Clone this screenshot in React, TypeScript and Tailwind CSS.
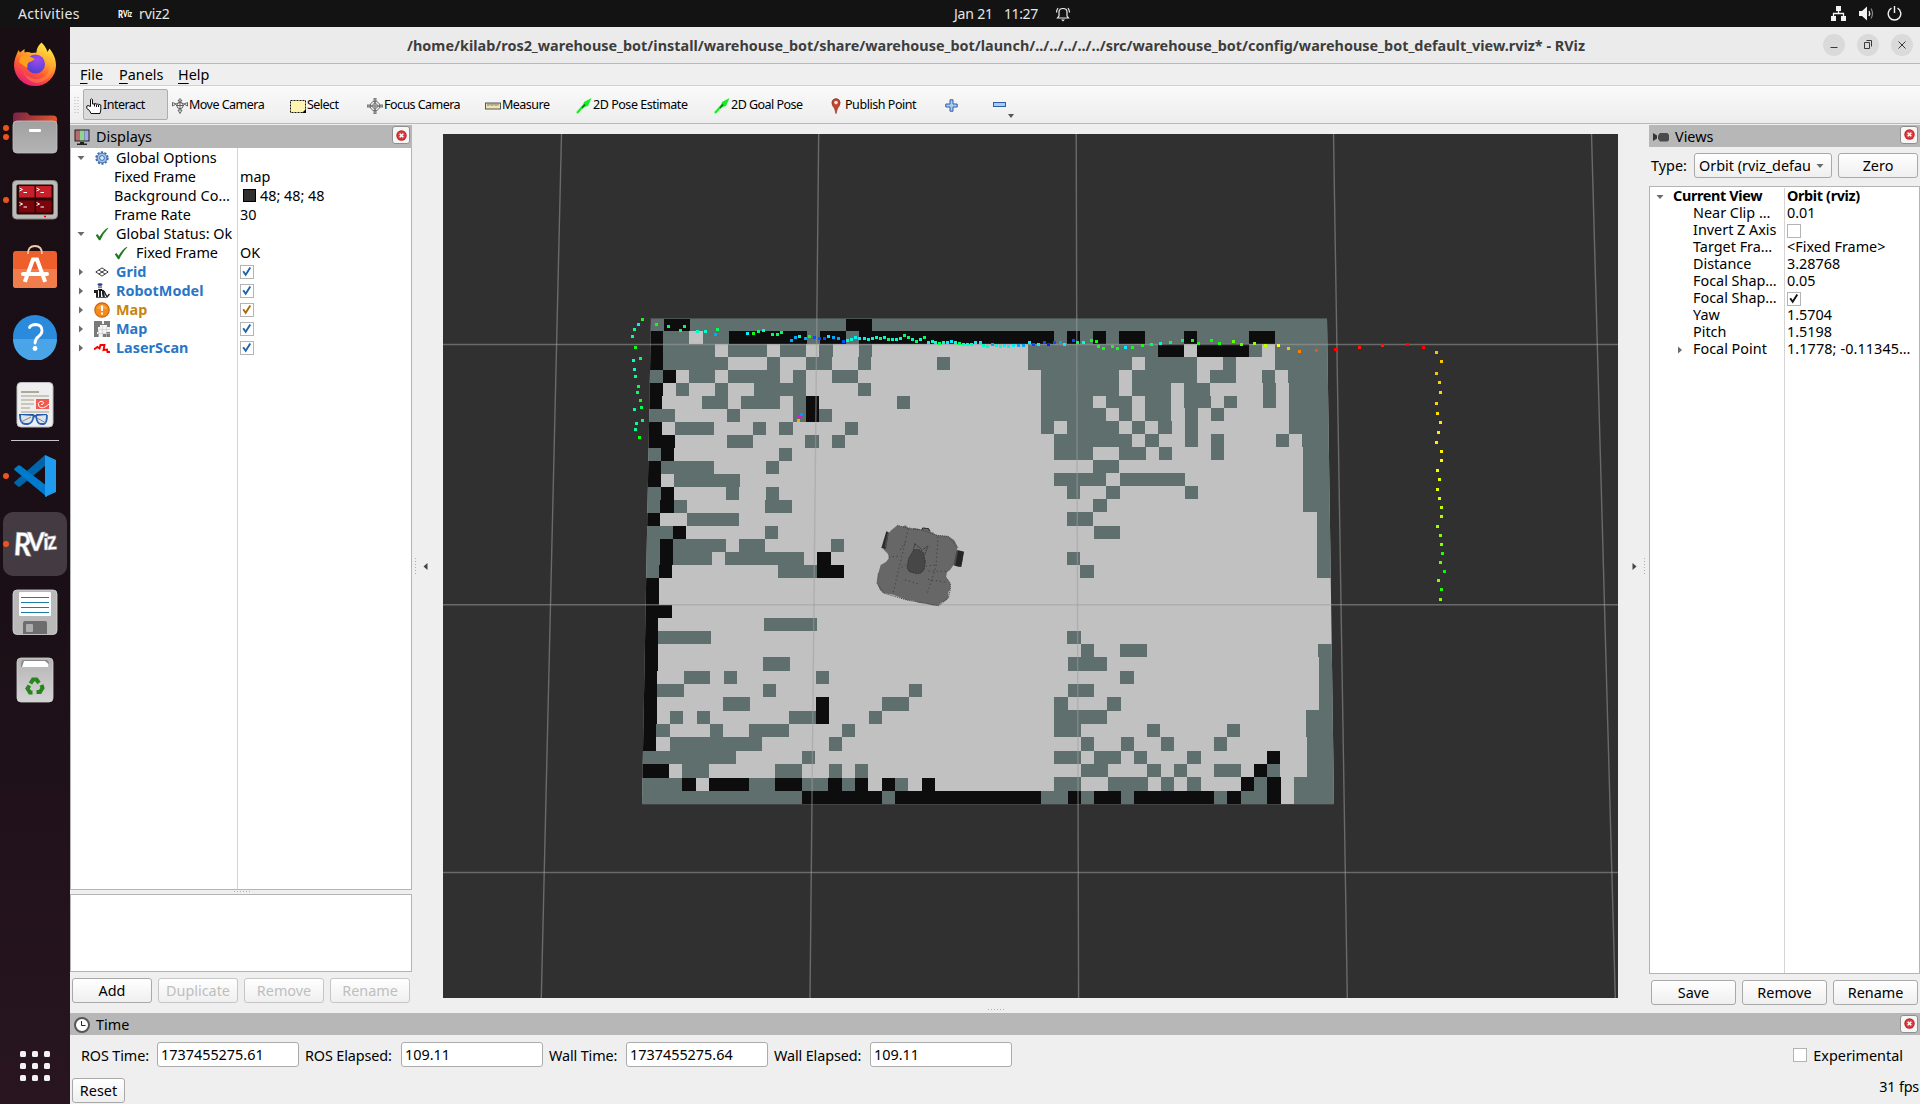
import React from "react";

type Span = [number, number];
type Row = { y: Span; t?: Span[]; b?: Span[]; l?: Span[] };

/* Occupancy map, west half: t = unknown, b = occupied, l = free. */
const WEST: Row[] = [
  { y: [318, 331], t: [[640, 975]], b: [[664, 690], [846, 872]] },
  { y: [331, 344], t: [[663, 729], [807, 820], [846, 859]], b: [[640, 663], [729, 807], [820, 846], [859, 975]], l: [[689, 703]] },
  { y: [344, 357], t: [[663, 715], [728, 767], [780, 806], [819, 833], [859, 872]], b: [[640, 663]] },
  { y: [357, 370], t: [[663, 728], [767, 780], [806, 832], [858, 871], [937, 950]], b: [[640, 663]] },
  { y: [370, 383], t: [[640, 663], [689, 715], [728, 780], [793, 806], [832, 858]], b: [[663, 676]] },
  { y: [383, 396], t: [[676, 689], [715, 728], [754, 806], [858, 871]], b: [[640, 663]] },
  { y: [396, 409], t: [[702, 728], [741, 780], [793, 806], [897, 910]], b: [[640, 662], [806, 819]] },
  { y: [409, 422], t: [[640, 675], [727, 740], [793, 806], [819, 832]], b: [[806, 819]] },
  { y: [422, 435], t: [[675, 714], [753, 766], [779, 793], [845, 858]], b: [[640, 662]] },
  { y: [435, 448], t: [[727, 753], [805, 819], [832, 845]], b: [[640, 675]] },
  { y: [448, 461], t: [[640, 661], [779, 792]], b: [[661, 674]] },
  { y: [461, 474], t: [[661, 714], [766, 779]], b: [[640, 661]] },
  { y: [474, 487], t: [[674, 740]], b: [[640, 661]] },
  { y: [487, 500], t: [[640, 661], [726, 739], [766, 779]], b: [[661, 674]] },
  { y: [500, 513], t: [[640, 660], [674, 687], [765, 792]], b: [[660, 674]] },
  { y: [513, 526], t: [[687, 739]], b: [[640, 660]] },
  { y: [526, 539], t: [[640, 673], [765, 778]], b: [[673, 686]] },
  { y: [539, 552], t: [[640, 660], [673, 726], [739, 765], [831, 844]], b: [[660, 673]] },
  { y: [552, 565], t: [[640, 660], [673, 712], [725, 804]], b: [[660, 673], [817, 831]] },
  { y: [565, 578], t: [[640, 659], [778, 817]], b: [[659, 672], [817, 844]] },
  { y: [578, 605], b: [[640, 659]] },
  { y: [605, 618], b: [[640, 672]] },
  { y: [618, 631], t: [[764, 817]], b: [[640, 658]] },
  { y: [631, 644], t: [[658, 711]], b: [[640, 658]] },
  { y: [644, 657], b: [[640, 658]] },
  { y: [657, 671], t: [[763, 790]], b: [[640, 658]] },
  { y: [671, 684], t: [[684, 710], [724, 737], [816, 829]], b: [[640, 657]] },
  { y: [684, 697], t: [[657, 684], [763, 776], [909, 922]], b: [[640, 657]] },
  { y: [697, 711], t: [[723, 750], [882, 909]], b: [[640, 657], [816, 829]] },
  { y: [711, 724], t: [[670, 683], [697, 710], [789, 816], [869, 882]], b: [[640, 657], [816, 829]] },
  { y: [724, 737], t: [[656, 670], [710, 723], [749, 789], [842, 855]], b: [[640, 656]] },
  { y: [737, 751], t: [[670, 762], [829, 842]], b: [[640, 656]] },
  { y: [751, 764], t: [[640, 736], [802, 815]] },
  { y: [764, 778], t: [[682, 709], [775, 802], [829, 842], [855, 868]], b: [[640, 669]] },
  { y: [778, 791], t: [[640, 682], [749, 775], [802, 828], [842, 855], [895, 908]], b: [[682, 696], [709, 749], [775, 802], [828, 842], [855, 868], [882, 895], [922, 935]] },
  { y: [791, 804], t: [[640, 802], [882, 895]], b: [[802, 882], [895, 975]] },
];

/* Occupancy map, east half. */
const EAST: Row[] = [
  { y: [318, 331], t: [[970, 1340]] },
  { y: [331, 344], t: [[1054, 1340]], b: [[970, 1054], [1067, 1080], [1093, 1106], [1119, 1145], [1184, 1197], [1249, 1275]] },
  { y: [344, 357], t: [[1028, 1158], [1249, 1262], [1275, 1340]], b: [[1158, 1184], [1197, 1249]] },
  { y: [357, 370], t: [[1028, 1132], [1145, 1197], [1223, 1236], [1275, 1340]] },
  { y: [370, 383], t: [[1041, 1119], [1132, 1197], [1210, 1236], [1262, 1275], [1288, 1340]] },
  { y: [383, 396], t: [[1041, 1119], [1132, 1171], [1184, 1210], [1263, 1276], [1289, 1340]] },
  { y: [396, 408], t: [[1041, 1093], [1106, 1132], [1145, 1171], [1184, 1211], [1224, 1237], [1263, 1276], [1289, 1340]] },
  { y: [408, 421], t: [[1041, 1106], [1119, 1132], [1145, 1171], [1185, 1198], [1211, 1224], [1289, 1340]] },
  { y: [421, 434], t: [[1041, 1054], [1067, 1119], [1132, 1145], [1158, 1172], [1185, 1198], [1289, 1340]] },
  { y: [434, 447], t: [[1054, 1132], [1145, 1159], [1185, 1198], [1211, 1224], [1276, 1289], [1302, 1340]] },
  { y: [447, 460], t: [[1054, 1093], [1119, 1146], [1159, 1172], [1211, 1224], [1303, 1340]] },
  { y: [460, 473], t: [[1093, 1119], [1303, 1340]] },
  { y: [473, 486], t: [[1054, 1106], [1120, 1185], [1303, 1340]] },
  { y: [486, 499], t: [[1067, 1080], [1106, 1120], [1185, 1198], [1303, 1340]] },
  { y: [499, 512], t: [[1093, 1107], [1303, 1340]] },
  { y: [512, 526], t: [[1067, 1093], [1317, 1340]] },
  { y: [526, 539], t: [[1094, 1120], [1317, 1340]] },
  { y: [539, 552], t: [[1317, 1340]] },
  { y: [552, 565], t: [[1067, 1080], [1317, 1340]] },
  { y: [565, 578], t: [[1080, 1094], [1317, 1340]] },
  { y: [631, 644], t: [[1067, 1081]] },
  { y: [644, 657], t: [[1081, 1094], [1120, 1147], [1318, 1340]] },
  { y: [657, 671], t: [[1068, 1107], [1319, 1340]] },
  { y: [671, 684], t: [[1120, 1134], [1319, 1340]] },
  { y: [684, 697], t: [[1068, 1094], [1319, 1340]] },
  { y: [697, 711], t: [[1054, 1068], [1107, 1121], [1319, 1340]] },
  { y: [710, 724], t: [[1054, 1107], [1306, 1340]] },
  { y: [724, 737], t: [[1054, 1081], [1147, 1160], [1227, 1240], [1306, 1340]] },
  { y: [737, 751], t: [[1081, 1094], [1121, 1134], [1161, 1174], [1214, 1227], [1307, 1340]] },
  { y: [751, 764], t: [[1054, 1081], [1094, 1121], [1134, 1147], [1187, 1201], [1307, 1340]], b: [[1267, 1280]] },
  { y: [764, 777], t: [[1081, 1108], [1147, 1161], [1174, 1187], [1214, 1241], [1267, 1280], [1307, 1340]], b: [[1254, 1267]] },
  { y: [777, 791], t: [[1054, 1081], [1108, 1148], [1161, 1174], [1187, 1201], [1254, 1267], [1294, 1340]], b: [[1241, 1254], [1267, 1281]] },
  { y: [791, 804], t: [[1041, 1068], [1081, 1094], [1121, 1134], [1214, 1227], [1241, 1267], [1294, 1340]], b: [[970, 1041], [1068, 1081], [1094, 1121], [1134, 1214], [1227, 1241], [1267, 1281]] },
];

type Pt = [number, number, string];
const G = "#00ff5a", C = "#00ffc8", L = "#10ff10", A = "#00f0ff", S = "#00a8ff", B = "#0050ff", M = "#00ff96";
const SCAN: Pt[] = [
  [642.5, 319.5, L], [638, 324.5, A], [634, 329.5, M], [632, 336.5, M], [635.5, 347.5, L], [640, 358.5, G], [633, 360.5, C], [634, 369, C], [635, 376.5, M], [638.5, 386, G], [637.5, 392, G], [640, 400, L], [641.5, 407.5, G], [634, 409.5, M], [642, 420.5, G], [636, 423.5, M], [635.5, 429, M], [639.5, 437, L],
  [656.5, 324, L], [668, 326.5, G], [680, 330, G], [684.5, 326.5, G], [697, 331.5, C], [705, 331.5, C], [715, 334.5, S], [717.5, 329.5, G],
  [747, 333, A], [753.5, 333.5, L], [758, 331, G], [763, 330.5, C], [772, 334.5, G], [777, 334, G], [781.5, 332.5, G], [791.5, 340.5, S], [795, 337.5, S], [799, 336, C], [805.5, 338.5, S], [809.5, 336.5, L], [814.5, 337.5, B], [819.5, 338, B], [824, 338, B], [828.5, 336.5, A], [833.5, 337.5, S], [838.5, 338.5, S], [843, 341, B], [847, 340, C], [851, 339, C], [855, 337, A], [859.5, 338.5, A], [864, 338, C], [868, 339.5, A], [872, 338, C], [876, 337.5, C], [880, 338, G], [884, 337, C], [888.5, 339, G], [892, 339.5, C], [896.5, 339.5, C], [900.5, 338.5, C], [904, 335, G], [908.5, 337.5, G], [912.5, 339.5, C], [916, 341.5, G], [920, 339.5, C], [924, 337.5, G], [928, 342.5, A], [932, 341.5, C], [935.5, 342, C], [939, 343, G], [943, 342.5, C], [947, 342.5, A], [951.5, 341, A], [955.5, 342.5, C], [959, 343.5, G], [963, 344, C], [967, 344.5, C], [971, 344, C], [975.5, 342.5, A], [980, 342.5, A], [983, 345.5, C], [987, 346.5, C], [992, 344.5, S], [996, 345.5, C], [1000, 346.5, C], [1004, 345.5, A], [1008.5, 346.5, A], [1013.5, 345.5, A], [1018, 345.5, S], [1023, 345, S], [1029, 342.5, A], [1033, 344, B], [1038, 344, A], [1044, 342.5, B], [1048.5, 344.5, "#0028ff"], [1054.5, 342.5, B], [1060, 342, S], [1064.5, 344.5, A], [1073.5, 340, B], [1077, 342.5, G], [1083.5, 342, C], [1091, 340.5, L], [1096, 341.5, L], [1098.5, 346.5, L], [1103.5, 348.5, L], [1112.5, 346, L], [1117.5, 348.5, L], [1125, 347.5, A], [1132.5, 347.5, L], [1142.5, 345.5, L], [1151.5, 344.5, G], [1160.5, 343.5, C], [1170.5, 342.5, G], [1182.5, 340, G], [1192.5, 340, L], [1198, 343.5, L], [1211.5, 340.5, L], [1219.5, 343.5, L], [1233, 341.5, "#60ff00"], [1241, 344.5, "#60ff00"], [1254.5, 343.5, "#90ff00"], [1265.5, 345, "#c0ff00"], [1278.5, 345.5, "#ffff00"], [1288, 348.5, "#ffc000"], [1299, 351, "#ff8000"], [1316, 350.5, "#ff5000"], [1335, 349.5, "#ff0000"], [1359, 347, "#ff1800"], [1382, 345.5, "#ff1800"], [1407.5, 344, "#ff0000"], [1423, 347.5, "#ff0000"],
  [1436.5, 352.5, "#ffc000"], [1441.5, 361, "#ffc400"], [1436, 373.5, "#ffc400"], [1439, 382.5, "#ffd000"], [1440.5, 392, "#ffd400"], [1436, 403.5, "#ffd400"], [1437.5, 413, "#ffe000"], [1440.5, 422, "#ffe400"], [1438.5, 432, "#ffec00"], [1436, 442.5, "#fff000"], [1441.5, 451, "#fff400"], [1441.5, 460, "#fff800"], [1437.5, 470.5, "#f8ff00"], [1439.5, 479.5, "#f0ff00"], [1437.5, 489, "#e0ff00"], [1439, 498, "#d0ff00"], [1441.5, 507, "#c0ff00"], [1441.5, 516.5, "#b0ff00"], [1437.5, 526, "#a0ff00"], [1440.5, 535, "#80ff00"], [1441, 544, "#80ff00"], [1442, 553, "#20ff00"], [1440.5, 562.5, "#60ff00"], [1444.5, 571.5, "#00ff00"], [1438.5, 580.5, "#80ff00"], [1441.5, 589.5, "#20ff00"], [1440.5, 599, "#80ff00"],
  [799, 416, "#ff00e0"], [801.5, 414, "#0098ff"], [798.5, 420, "#f0b400"],
];

const MapRows = ({ rows }: { rows: Row[] }) => (
  <>
    {rows.map((r, i) => {
      const h = r.y[1] - r.y[0];
      const draw = (s: Span[] | undefined, f: string) =>
        (s ?? []).map(([a, b]) => <rect key={f + a} x={a} y={r.y[0]} width={b - a} height={h} fill={f} />);
      return (
        <g key={i}>
          {draw(r.t, "#5f6f6d")}
          {draw(r.b, "#0d0d0d")}
          {draw(r.l, "#c1c1c1")}
        </g>
      );
    })}
  </>
);

const Scene = () => (
  <svg className="block h-[864px] w-[1175px] shrink-0 bg-[#303030]" viewBox="443 134 1175 864" shapeRendering="crispEdges">
    <defs>
      <clipPath id="m"><path d="M651 318H1327L1334 804H642Z" /></clipPath>
    </defs>
    <g clipPath="url(#m)">
      <rect x="640" y="318" width="700" height="486" fill="#c1c1c1" />
      <MapRows rows={WEST} />
      <MapRows rows={EAST} />
    </g>
    <path d="M650 318.5H1327" stroke="#4b5352" />
    <path d="M642 804.5H1334" stroke="#424242" />
    <g stroke="#a0a0a0" strokeOpacity=".52" strokeWidth="1.4" shapeRendering="auto">
      <path d="M443 344.5H1618M443 604.8H1618M443 872.5H1618" />
      <path d="M561.5 134L541.3 998M818.7 134L810 998M1076.2 134L1078.6 998M1333.5 134L1347.3 998M1591.5 134L1615.3 998" />
    </g>
    <g transform="translate(620 300) scale(.33333)" shapeRendering="auto">
      <path fill="#676767" d="M800 728L802 706 812 692 832 676 846 680 856 676 868 686 888 685 906 690 908 683 926 685 929 694 950 706 985 709 1003 721 1013 742 1010 752 1031 755 1026 790 1018 801 1000 796 990 810 981 817 978 832 991 850 991 868 985 876 985 894 976 903 962 909 956 917 936 916 915 910 900 909 880 902 860 900 820 884 790 879 780 870 771 850 775 820 782 795 798 786 807 774 804 762 790 748Z" />
      <path stroke="#3a3a3a" strokeWidth="2.5" fill="none" strokeDasharray="4 8" d="M865 686L838 800 818 884M954 710L948 800 922 880M841 750L860 720M806 772L834 768M845 802L865 790M905 800L945 795M926 813L980 814M855 840L900 853M924 838L975 846M868 684L906 690M928 690L950 706" />
      <path fill="none" stroke="#424242" strokeWidth="3" strokeDasharray="3 3" d="M978 832L991 850 991 868 985 894 956 917 915 910 860 900 790 879 771 850 775 820M832 676L868 686 906 690 950 706 985 709 1013 742" />
      <path d="M799 694L806 697 797 747 784 744Z" fill="#2b2b2b" />
      <path d="M803 697L806 698 799 742 793 740Z" fill="#4a4a4a" />
      <path d="M1012 750L1032 755 1024 801 1004 797Z" fill="#262626" />
      <path d="M1009 752L1014 753 1006 796 1001 794Z" fill="#4a4a4a" />
      <path fill="#474747" stroke="#2c2c2c" strokeWidth="2.5" strokeDasharray="5 3" d="M880 752Q895 742 910 758L916 785 912 808Q905 822 890 821L868 815 861 804 866 775Z" />
      <path stroke="#333" strokeWidth="3" strokeDasharray="4 2" fill="none" d="M885 730L880 752M924 738L914 765M885 732L905 748M920 740L905 752" />
      <path stroke="#2f2f2f" strokeWidth="3" fill="none" d="M906 690L908 684 926 686 929 694" />
    </g>
    {SCAN.map(([x, y, c], i) => (
      <rect key={i} x={Math.round(x - 1.5)} y={Math.round(y - 1.5)} width="3" height="3" fill={c} />
    ))}
  </svg>
);

/* ---------- small pieces ---------- */
const Close = () => (
  <span className="flex h-[18px] w-[18px] items-center justify-center rounded-[3px] border border-[#8f8f8f] bg-[#f6f6f6]">
    <svg className="h-[11px] w-[11px]" viewBox="0 0 11 11">
      <circle cx="5.5" cy="5.5" r="5.2" fill="#c81e22" />
      <circle cx="5.5" cy="5.5" r="4" fill="#d94045" />
      <path d="M3.7 3.7L7.3 7.3M7.3 3.7L3.7 7.3" stroke="#fff" strokeWidth="1.5" />
    </svg>
  </span>
);

const Btn = ({ children, cls, off }: { children: string; cls: string; off?: boolean }) => (
  <button className={`${cls} flex h-[25px] items-center justify-center rounded-[3px] border bg-linear-to-b from-white to-[#efefef] pt-[2px] leading-none ${off ? "border-[#c6c6c6] text-[#bebebe]" : "border-[#a9a9a9] text-black"}`}>
    {children}
  </button>
);

const Check = ({ c }: { c?: string }) => (
  <span className="flex h-[14px] w-[14px] shrink-0 items-center justify-center border border-[#b4b4b4] bg-white">
    {c && (
      <svg className="h-[12px] w-[12px]" viewBox="0 0 12 12">
        <path d="M2.2 5.2L4.7 8.8 9.3 1.6" stroke={c} strokeWidth="1.9" fill="none" />
      </svg>
    )}
  </span>
);

const Arrow = ({ open }: { open?: boolean }) => (
  <svg className="h-[8px] w-[8px]" viewBox="0 0 8 8">
    <path d={open ? "M.5 2H7.5L4 6Z" : "M2 .5V7.5L6 4Z"} fill="#6a6a6a" />
  </svg>
);

const Tick = () => (
  <svg className="h-[14px] w-[14px]" viewBox="0 0 14 14">
    <path d="M.8 8.2L2.4 7 4.6 9.8Q8 3.6 13 .8L13.3 1.3Q8.6 6 5.3 13.2L4 13.2Z" fill="#1f7a1f" />
  </svg>
);

const Gear = () => (
  <svg className="h-[14px] w-[14px]" viewBox="0 0 14 14">
    <circle cx="7" cy="7" r="5.8" fill="none" stroke="#3f6fb0" strokeWidth="1.8" strokeDasharray="2.2 1.44" />
    <circle cx="7" cy="7" r="4.9" fill="#a5c3e6" stroke="#3f6fb0" />
    <circle cx="7" cy="7" r="2.4" fill="#dce9f7" stroke="#3f6fb0" />
  </svg>
);

const GridIcon = () => (
  <svg className="h-[10px] w-[14px]" viewBox="0 0 14 10">
    <path d="M.8 5L7 .9 13.2 5 7 9.1ZM3.9 3L10.1 7.1M10.1 3L3.9 7.1" stroke="#3a3a3a" fill="none" />
  </svg>
);

const RobotIcon = () => (
  <svg className="h-[16px] w-[16px]" viewBox="0 0 16 16">
    <ellipse cx="6" cy="1.6" rx="2.6" ry="1.3" fill="#2b3e9c" />
    <path d="M4 3.2H8V5.2H4Z" fill="#888" />
    <path d="M0 7H4V15H2V10H0ZM5 7H7V14H5ZM8 7H10L11 15H9L8 11Z" fill="#222" />
    <path d="M4 6H8L9 8H5Z" fill="#111" />
    <path d="M10 8L13 14 15.5 11" stroke="#222" strokeWidth="1.4" fill="none" />
    <path d="M2 14.5H12" stroke="#555" />
  </svg>
);

const WarnIcon = () => (
  <svg className="h-[16px] w-[16px]" viewBox="0 0 16 16">
    <circle cx="8" cy="8" r="7.2" fill="#f58b1a" stroke="#c9650c" strokeWidth="1.2" />
    <path d="M3 7A5.2 5.2 0 0 1 13 7Z" fill="#fbb565" opacity=".6" />
    <path d="M8 3.5V9M8 10.5V12.5" stroke="#fff" strokeWidth="2" />
  </svg>
);

const MapIcon = () => (
  <svg className="h-[16px] w-[16px]" viewBox="0 0 16 16" shapeRendering="crispEdges">
    <rect width="16" height="16" fill="#f4f4f4" />
    <path d="M0 0H8V3H6V6H4V8H0ZM10 0H16V6H13V4H10ZM0 11H3V13H5V16H0ZM9 13H12V11H16V16H9ZM0 8H4V11H0ZM6 3H10V4H6Z" fill="#7a7a7a" />
    <path d="M4.500 9V16M8.500 5V16M12.500 6V16M5 8.500H16M4 12.500H16" stroke="#c8c8c8" strokeWidth=".6" />
  </svg>
);

const LaserIcon = () => (
  <svg className="h-[16px] w-[16px]" viewBox="0 0 16 16">
    <path d="M0 9.500L3.500 7 5.500 8.500 6.500 5H10.500L9.500 10 13 9.500 13.500 12H16" stroke="#f80000" strokeWidth="1.900" fill="none" />
  </svg>
);

const TreeRow = ({ open, arrow, icon, label, pad, value, cls = "" }: { open?: boolean; arrow?: boolean; icon?: React.ReactNode; label: string; pad: string; value?: React.ReactNode; cls?: string }) => (
  <div className="flex h-[19px] items-center">
    <div className={`flex h-full w-[167px] shrink-0 items-center border-r border-[#d4d4d4] ${pad}`}>
      {arrow && <span className="mr-[7px] flex w-[10px]"><Arrow open={open} /></span>}
      {icon && <span className="mr-[7px] flex w-[16px] justify-center">{icon}</span>}
      <span className={`whitespace-nowrap pt-[2px] ${cls}`}>{label}</span>
    </div>
    <div className={`flex items-center pl-[2px] ${typeof value === "string" ? "pt-[2px]" : ""}`}>{value}</div>
  </div>
);

const ViewRow = ({ open, arrow, label, value, b }: { open?: boolean; arrow?: boolean; label: string; value: React.ReactNode; b?: boolean }) => (
  <div className={`flex h-[17px] items-center ${b ? "font-bold tracking-[-0.35px]" : ""}`}>
    <div className={`flex h-full w-[135px] shrink-0 items-center border-r border-[#d4d4d4] ${b ? "pl-[6px]" : arrow ? "pl-[26px]" : "pl-[43px]"}`}>
      {arrow && <span className="flex w-[17px] shrink-0"><Arrow open={open} /></span>}
      <span className="whitespace-nowrap">{label}</span>
    </div>
    <div className="flex items-center whitespace-nowrap pl-[2px]">{value}</div>
  </div>
);

/* ---------- dock ---------- */
const Slot = ({ children, dots = 0, active }: { children: React.ReactNode; dots?: number; active?: boolean }) => (
  <div className="relative flex h-[68px] w-[70px] items-center justify-center">
    {active && <span className="absolute left-[3px] top-[2px] h-[64px] w-[64px] rounded-[10px] bg-[#443b42]" />}
    <span className="absolute left-[3px] top-0 flex h-full flex-col justify-center gap-[3px]">
      {Array.from({ length: dots }, (_, i) => <i key={i} className="block h-[6px] w-[6px] rounded-full bg-[#e95420]" />)}
    </span>
    <svg className="relative h-[48px] w-[48px]" viewBox="0 0 48 48">{children}</svg>
  </div>
);

const Dock = () => (
  <nav className="flex w-[70px] shrink-0 flex-col items-center bg-linear-to-b from-[#190e14] via-[#1a0f16] to-[#28151f] pt-[3px]">
    <Slot>
      <defs>
        <linearGradient id="ff" x1=".8" y1="0" x2=".3" y2="1"><stop offset="0" stopColor="#fff44f" /><stop offset=".35" stopColor="#ffb02c" /><stop offset=".65" stopColor="#ff5a30" /><stop offset="1" stopColor="#e6187c" /></linearGradient>
        <radialGradient id="fp" cx=".6" cy=".25" r=".8"><stop offset="0" stopColor="#a04cf0" /><stop offset="1" stopColor="#4a3fd0" /></radialGradient>
        <linearGradient id="gy" x1="0" y1="0" x2="0" y2="1"><stop offset="0" stopColor="#a0a0a0" /><stop offset="1" stopColor="#b4b4b4" /></linearGradient>
        <linearGradient id="fl" x1="0" y1="0" x2="1" y2="0"><stop offset="0" stopColor="#7a2348" /><stop offset="1" stopColor="#e0562b" /></linearGradient>
        <linearGradient id="tr" x1="0" y1="0" x2="0" y2="1"><stop offset="0" stopColor="#b5b5b5" /><stop offset="1" stopColor="#d4d4d4" /></linearGradient>
      </defs>
      <path fill="url(#ff)" d="M30.500 2.500C33 5 35.500 8 36.500 12L38.500 8.500C42 13 45 18 45 25.500A21 20.500 0 0 1 3 25.500C3 20 5 15.500 7.500 10L9 12.500 13.500 9V12.500Q17 11.500 20.500 13L25.500 12.500C25.500 8 28 5 30.500 2.500Z" />
      <circle cx="24.500" cy="24" r="9.500" fill="url(#fp)" />
      <path d="M8 22Q8 16 15 14.500L24 19Q21 21.500 17.500 22.500 15.500 25 16.500 28 10 24 8 22Z" fill="#ff9d1e" />
      <path d="M35 16Q40 22 38 31 34 40 24 39 15 38 12 30 15 42 26 43 40 41 42 27 42 19 35 16Z" fill="#ffb340" opacity=".35" />
    </Slot>
    <Slot dots={2}>
      <path d="M2 14V8Q2 4.500 5 4.500H16L19 7.500H42Q46 7.500 46 11V16H2Z" fill="url(#fl)" />
      <rect x="2" y="13" width="44" height="32" rx="4" fill="url(#gy)" stroke="#c2c2c2" strokeWidth=".8" />
      <rect x="18" y="21" width="12" height="3" rx="1" fill="#fff" />
    </Slot>
    <Slot dots={1}>
      <rect x="1.500" y="4.500" width="45" height="38.500" rx="4" fill="#bcbcb8" stroke="#8a8a86" />
      <rect x="5.500" y="8.500" width="37" height="30" rx="1.500" fill="#2a0606" />
      <rect x="8" y="10" width="15.500" height="11.500" fill="#c8202a" /><rect x="25" y="10" width="15.500" height="11.500" fill="#c8202a" />
      <rect x="8" y="24.500" width="15.500" height="12" fill="#7a060c" /><rect x="25" y="24.500" width="15.500" height="12" fill="#7a060c" />
      <path d="M8.500 12L11.500 13.500 8.500 15M25.500 12L28.500 13.500 25.500 15M8.500 26.500L11.500 28 8.500 29.500M25.500 26.500L28.500 28 25.500 29.500M12.500 16.500H16M29.500 16.500H33M12.500 31H16M29.500 31H33" stroke="#fff" fill="none" />
      <path d="M33 40.500H35" stroke="#e00" strokeWidth="1.500" />
    </Slot>
    <Slot>
      <rect x="2" y="7" width="44" height="37" rx="3" fill="#ef5f2b" />
      <path d="M2 25H46V41Q46 44 43 44H5Q2 44 2 41Z" fill="#f27d4c" />
      <path d="M17 10Q17 2 24 2T31 10" stroke="#f5c9a8" strokeWidth="1.800" fill="none" />
      <path d="M14.500 36L22 15.500H26L33.500 36" stroke="#fff" strokeWidth="4" fill="none" strokeLinecap="square" />
      <path d="M12 30H36" stroke="#fff" strokeWidth="4" strokeLinecap="round" />
    </Slot>
    <Slot>
      <circle cx="24" cy="25" r="22" fill="#2a8bdc" />
      <path d="M2 27A22 22 0 0 0 46 27Z" fill="#4aa5e8" />
      <path d="M18.500 15.500Q20 12.500 25 12.500 31 13 31 18.500 31 22 27.500 24.500 24.500 26.500 24 31" stroke="#fff" strokeWidth="2.800" fill="none" strokeLinecap="round" />
      <circle cx="24" cy="36.500" r="2.400" fill="#fff" />
    </Slot>
    <Slot>
      <rect x="6" y="2.500" width="36" height="44.500" rx="4" fill="#eeeeee" stroke="#bdbdbd" />
      <path d="M10 12H28" stroke="#b0a898" strokeWidth="2" />
      <path d="M10 16H38M10 20H23M10 24H23M10 28H19M10 32H38" stroke="#cbc6ba" strokeWidth="2" />
      <rect x="25" y="19" width="13" height="10" fill="#f05a50" />
      <path d="M38 24Q32 30 28 26.500 26 23 29 21.500 32.500 20.500 32.500 23 32 25 30 24.500" stroke="#fff" strokeWidth="1" fill="none" />
      <path d="M8 35H22L24 36.500 26 35H36" stroke="#2459a8" strokeWidth="2" fill="none" />
      <path d="M9 35Q9 44 14 44H17Q22 43 22.500 36M25 36Q26 44 30 44H33Q36 43 36 35" stroke="#2b62b5" strokeWidth="1.800" fill="#dde3ea" />
      <path d="M10 42L20 37M26 38L35 43" stroke="#888" />
    </Slot>
    <span className="mb-px mt-[2px] h-px w-[48px] bg-[#c9c6c8]" />
    <Slot dots={1}>
      <path fill="#0065a9" d="M3 31L7 34.500Q8 35 9 34.500L34 14V3L3.500 30Q3 30.500 3 31Z" />
      <path fill="#007acc" d="M3 17L7 13.500Q8 13 9 13.500L36 34V45L3.500 18Q3 17.500 3 17Z" />
      <path fill="#1f9cf0" d="M34 3L45 8V40L34 45Z" />
    </Slot>
    <Slot dots={1} active>
      <g fontFamily="Lato" fontWeight="900" fill="#fff" stroke="#8e8a8c" strokeWidth=".5">
        <text x="2" y="35" fontSize="32" textLength="18" lengthAdjust="spacingAndGlyphs" transform="rotate(4 2 35)">R</text>
        <text x="16" y="31" fontSize="27" textLength="18" lengthAdjust="spacingAndGlyphs">V</text>
        <text x="32" y="30" fontSize="23" textLength="6" lengthAdjust="spacingAndGlyphs">i</text>
        <text x="36.500" y="30" fontSize="26" textLength="10" lengthAdjust="spacingAndGlyphs" transform="rotate(-5 37 30)">z</text>
      </g>
    </Slot>
    <Slot>
      <rect x="2" y="2" width="44" height="44.500" rx="4" fill="#b9b9b9" stroke="#d8d8d8" strokeWidth=".8" />
      <rect x="8" y="4" width="32" height="24" rx="1" fill="#fff" />
      <path d="M10 9.500H38M10 14.500H38M10 19.500H38M10 24.500H38" stroke="#1e7ca4" />
      <path d="M12 46V35Q12 33 14 33H34Q36 33 36 35V46Z" fill="#6d6d6d" />
      <rect x="15" y="36" width="7" height="8" rx="1" fill="#adadad" />
    </Slot>
    <Slot>
      <rect x="6" y="2" width="36" height="44" rx="4" fill="url(#tr)" stroke="#d2d2d2" strokeWidth=".8" />
      <path d="M10 9Q10 4 13 4H35Q38 4 38 9V11H10Z" fill="#8a8a8a" />
      <path d="M11 11L13 5H34L37.500 8V11Z" fill="#fff" />
      <g stroke="#26861c" strokeWidth="4" fill="none">
        <path d="M19.500 27.500L22 23.500H25.500L28 27" /><path d="M30.500 29L31.500 32 29 36H25.500" /><path d="M21.500 36.500H19L16.500 32.500 18.500 29.500" />
      </g>
    </Slot>
    <div className="mb-[23px] mt-auto grid grid-cols-3 gap-[6px]">
      {Array.from({ length: 9 }, (_, i) => <i key={i} className="block h-[6px] w-[6px] rounded-[1.5px] bg-[#f2f2f2]" />)}
    </div>
  </nav>
);

/* ---------- toolbar ---------- */
const Tool = ({ icon, label, cls }: { icon: React.ReactNode; label: string; cls: string }) => (
  <div className={`flex h-[31px] items-center pl-[3px] pt-[2px] ${cls}`}>
    <svg className="h-[16px] w-[16px] shrink-0" viewBox="0 0 16 16">{icon}</svg>
    <span className="ml-px whitespace-nowrap">{label}</span>
  </div>
);
const greenArrow = (
  <>
    <path d="M1 15L9 6" stroke="#10f020" strokeWidth="2.2" />
    <path d="M15.5 0L12 8 6.5 9.5 8 4Z" fill="#10f020" />
    <path d="M6 10L9 6.5" stroke="#067a10" strokeWidth="1.6" />
  </>
);

const Toolbar = () => (
  <div className="flex h-[38px] items-center border-b border-[#b9b9b9] bg-linear-to-b from-[#fafafa] to-[#ededed] pl-[4px] text-[12.5px] tracking-[-0.52px] text-black">
    <svg className="mr-[4px] h-[18px] w-[5px]" viewBox="0 0 5 18"><path d="M1 1V18M4 1V18" stroke="#b5b5b5" strokeDasharray="1 2" /></svg>
    <Tool cls="w-[85px] rounded-[2px] border border-[#adadad] bg-[#dbdbdb] !pl-[2px]" label="Interact" icon={
      <path d="M4.500 8.500V1.500Q5.500 0 6.500 1.500V6H8.500V5.500L10.500 6 12.500 6.300 14.800 7V12L14 15.500H5L3.500 12.500 .8 10.500V8L2 7.500ZM8.500 6V8.500M10.500 6.500V9M12.500 7V9" fill="#fff" stroke="#111" strokeWidth="1" />
    } />
    <Tool cls="ml-px w-[118px]" label="Move Camera" icon={
      <g fill="#f2f2f2" stroke="#555" strokeWidth=".9"><circle cx="8" cy="7.500" r="3.200" /><path d="M8 .5L10 3H6ZM8 15.500L6 12H10ZM.5 4.500L4 6 .5 8ZM15.500 4.500L12 6 15.500 8ZM8 3V12M4 7.500H12M4 6Q8 3 12 6" /></g>
    } />
    <Tool cls="w-[77px]" label="Select" icon={<><rect x=".5" y="2.500" width="15" height="12" fill="#fff3b0" stroke="#111" strokeDasharray="2 1" /><path d="M16 11V15H12Z" fill="#000" /></>} />
    <Tool cls="w-[118px] tracking-[-0.55px]" label="Focus Camera" icon={
      <g fill="none" stroke="#666" strokeWidth=".9"><circle cx="8" cy="8" r="4.800" fill="#ececec" /><circle cx="8" cy="8" r="2.500" /><path d="M8 0V16M0 8H16M7 0H9V4H7ZM7 12H9V16H7ZM0 7H4V9H0ZM12 7H16V9H12Z" /></g>
    } />
    <Tool cls="w-[91px]" label="Measure" icon={<><rect x=".5" y="5" width="15" height="6" fill="#efe3b0" stroke="#555" /><path d="M3 5.500V8M5 5.500V7.500M7 5.500V8M9 5.500V7.500M11 5.500V8M13 5.500V7.500" stroke="#555" strokeWidth=".8" /></>} />
    <Tool cls="w-[138px] tracking-[-0.46px]" label="2D Pose Estimate" icon={greenArrow} />
    <Tool cls="w-[114px]" label="2D Goal Pose" icon={greenArrow} />
    <Tool cls="w-[120px] tracking-[-0.45px]" label="Publish Point" icon={<><path d="M8 15.700Q7 10 4.500 7.500 3 4 5 1.800 8-.8 11 1.800 13 4 11.500 7.500 9 10 8 15.700Z" fill="#c2452c" stroke="#7c2c1a" strokeWidth=".6" /><circle cx="8" cy="4.600" r="1.800" fill="#f5e6e0" /></>} />
    <svg className="mt-[2px] h-[13px] w-[13px]" viewBox="0 0 13 13"><path d="M5 .8H8V5H12.200V8H8V12.200H5V8H.8V5H5Z" fill="#a9cbf0" stroke="#2c5fa8" /></svg>
    <div className="ml-[35px] flex h-[31px] w-[26px] flex-col items-start">
      <svg className="mt-[13px] h-[5px] w-[13px]" viewBox="0 0 13 5"><rect x=".5" y=".5" width="12" height="4" fill="#a9cbf0" stroke="#2c5fa8" /></svg>
      <svg className="ml-[15px] mt-[7px] h-[4px] w-[6px]" viewBox="0 0 6 4"><path d="M0 0H6L3 4Z" fill="#555" /></svg>
    </div>
  </div>
);

const Field = ({ label, value, lw }: { label: string; value: string; lw: string }) => (
  <div className="flex items-center">
    <span className={`${lw} whitespace-nowrap pt-[4px] tracking-[-0.12px]`}>{label}</span>
    <span className="mr-[6px] flex h-[25px] w-[142px] items-center rounded-[3px] border border-[#ababab] bg-white pl-[3px] pt-[2px]">{value}</span>
  </div>
);

const WinBtn = ({ d }: { d: string }) => (
  <svg className="h-[22px] w-[22px]" viewBox="0 0 22 22"><circle cx="11" cy="11" r="11" fill="#dadada" /><path d={d} stroke="#3a3a3a" fill="none" /></svg>
);

const VDots = () => (
  <svg className="h-[17px] w-[2px]" viewBox="0 0 2 17"><path d="M.5 0V17" stroke="#b0b0b0" strokeDasharray="1 2" /></svg>
);

export default function App() {
  return (
    <div className="flex h-[1104px] w-[1920px] flex-col overflow-hidden bg-[#efefef] font-['Noto_Sans',sans-serif] text-[14.4px] leading-none text-black">
      <header className="grid h-[27px] shrink-0 grid-cols-3 items-center bg-[#131313] text-[14px] tracking-[-0.1px] text-[#e6e6e6]">
        <div className="flex items-center pl-[18px]">
          <span className="w-[100px] tracking-[0.35px]">Activities</span>
          <svg className="mr-[6px] h-[14px] w-[15px] overflow-visible" viewBox="0 0 15 14">
            <g fontFamily="Lato" fontWeight="900" fill="#fff"><text x="0" y="11" fontSize="11" textLength="5" lengthAdjust="spacingAndGlyphs">R</text><text x="5" y="10" fontSize="9.500" textLength="9" lengthAdjust="spacingAndGlyphs">Viz</text></g>
          </svg>
          <span>rviz2</span>
        </div>
        <div className="flex items-center pl-[314px]">
          <span className="w-[50px] whitespace-nowrap tracking-[-0.2px]">Jan 21</span>
          <span className="w-[51px] tracking-[-0.4px]">11:27</span>
          <svg className="h-[16px] w-[16px]" viewBox="0 0 16 16"><path d="M2.500 12H13.500L12 10V6Q12 2.500 8 2.500T4 6V10ZM3 2Q1.500 4 1.500 6.500M13 2Q14.500 4 14.500 6.500" stroke="#eee" fill="none" strokeWidth="1.200" /><path d="M6 13.500H10L8 15.500Z" fill="#eee" /></svg>
        </div>
        <div className="flex items-center justify-end gap-[13px] pr-[18px]">
          <svg className="h-[15px] w-[15px]" viewBox="0 0 15 15"><path d="M5 0H10V5H5ZM0 10H5V15H0ZM10 10H15V15H10Z" fill="#f2f2f2" /><path d="M7.500 4V7.500M2.500 11V7.500H12.500V11" stroke="#f2f2f2" fill="none" strokeWidth="1.300" /></svg>
          <svg className="h-[15px] w-[15px]" viewBox="0 0 15 15"><path d="M0 5H3L8 .5V14.500L3 10H0Z" fill="#f2f2f2" /><path d="M10 5Q11.500 7.500 10 10" stroke="#f2f2f2" fill="none" strokeWidth="1.300" /><path d="M12 2.500Q15 7.500 12 12.500" stroke="#888" fill="none" strokeWidth="1.200" /></svg>
          <svg className="h-[15px] w-[15px]" viewBox="0 0 15 15"><path d="M4.500 2.200A6.300 6.300 0 1 0 10.500 2.200M7.500 0V7" stroke="#f2f2f2" fill="none" strokeWidth="1.400" /></svg>
        </div>
      </header>

      <div className="flex min-h-0 flex-1">
        <Dock />
        <div className="flex w-[1850px] flex-col">
          <div className="flex h-[37px] shrink-0 items-center border-b border-[#b9b9b9] bg-[#ebebeb]">
            <h1 className="w-[1560px] whitespace-nowrap pl-[337px] pt-[2px] text-[14.4px] font-bold tracking-[0.01px] text-[#3d3d3d]">
              /home/kilab/ros2_warehouse_bot/install/warehouse_bot/share/warehouse_bot/launch/../../../../../src/warehouse_bot/config/warehouse_bot_default_view.rviz* - RViz
            </h1>
            <div className="ml-auto flex gap-[12px] pr-[7px]">
              <WinBtn d="M7.500 13.500H14.500" />
              <WinBtn d="M7.500 8.500H12.500V14.500H7.500ZM9.500 6.500H14.500V12.500" />
              <WinBtn d="M7.500 7.500L14.500 14.500M14.500 7.500L7.500 14.500" />
            </div>
          </div>
          <div className="flex h-[22px] shrink-0 items-center border-b border-[#d2d2d2] pl-[10px] pt-[2px]">
            {[["F", "ile", "w-[39px]"], ["P", "anels", "w-[59px]"], ["H", "elp", "w-[60px]"]].map(([a, b, w]) => (
              <span key={a} className={w}><span className="underline decoration-1 underline-offset-[3px]">{a}</span>{b}</span>
            ))}
          </div>
          <Toolbar />

          <div className="flex h-[889px] shrink-0">
            {/* Displays */}
            <section className="flex w-[342px] flex-col pt-px">
              <div className="flex h-[23px] shrink-0 items-center justify-between bg-[#b7b7b7] pl-[4px] pr-[2px]">
                <span className="flex items-center">
                  <svg className="mr-[6px] h-[16px] w-[16px]" viewBox="0 0 16 16"><rect x=".5" y=".5" width="15" height="12" fill="#222" /><rect x="1.500" y="1.500" width="4.500" height="10" fill="#b9686c" /><rect x="6" y="1.500" width="4.500" height="10" fill="#8fd492" /><rect x="10.500" y="1.500" width="4" height="10" fill="#a5a5ea" /><path d="M6 13H10V14.500H13V16H3V14.500H6Z" fill="#222" /></svg>
                  <span className="pt-[2px]">Displays</span>
                </span>
                <span className="mb-[3px]"><Close /></span>
              </div>
              <div className="flex h-[742px] shrink-0 flex-col border border-t-0 border-[#b4b4b4] bg-white">
                <TreeRow pad="pl-[6px]" arrow open icon={<Gear />} label="Global Options" cls="ml-[-1px]" />
                <TreeRow pad="pl-[43px]" label="Fixed Frame" value="map" />
                <TreeRow pad="pl-[43px]" label="Background Co…" cls="tracking-[0.08px]" value={<span className="flex items-center"><i className="ml-[3px] mr-[4px] block h-[13px] w-[13px] border border-black bg-[#303030]" /><span className="pt-[2px]">48; 48; 48</span></span>} />
                <TreeRow pad="pl-[43px]" label="Frame Rate" value="30" />
                <TreeRow pad="pl-[6px]" arrow open icon={<Tick />} label="Global Status: Ok" cls="ml-[-1px] tracking-[0.02px]" />
                <TreeRow pad="pl-[42px]" icon={<Tick />} label="Fixed Frame" value="OK" />
                {([
                  [<GridIcon key="i" />, "Grid", "#1f64a8", "text-[#2a76c6]"],
                  [<RobotIcon key="i" />, "RobotModel", "#1f64a8", "text-[#2a76c6]"],
                  [<WarnIcon key="i" />, "Map", "#a8690a", "text-[#c8840f]"],
                  [<MapIcon key="i" />, "Map", "#1f64a8", "text-[#2a76c6]"],
                  [<LaserIcon key="i" />, "LaserScan", "#1f64a8", "text-[#2a76c6]"],
                ] as [React.ReactNode, string, string, string][]).map(([ic, l, c, t], i) => (
                  <TreeRow key={i} pad="pl-[6px]" arrow icon={ic} label={l} cls={`ml-[-1px] font-bold tracking-[0.02px] ${t}`} value={<Check c={c} />} />
                ))}
                <div className="w-[167px] flex-1 border-r border-[#d4d4d4]" />
              </div>
              <svg className="ml-[164px] h-[4px] w-[17px] shrink-0" viewBox="0 0 17 4"><path d="M0 1.500H17" stroke="#b0b0b0" strokeDasharray="1 2" /></svg>
              <div className="h-[78px] shrink-0 border border-[#b4b4b4] bg-white" />
              <div className="mt-[6px] flex gap-[6px] px-[2px]">
                <Btn cls="w-[80px]">Add</Btn>
                <Btn cls="w-[80px]" off>Duplicate</Btn>
                <Btn cls="w-[80px]" off>Remove</Btn>
                <Btn cls="w-[80px]" off>Rename</Btn>
              </div>
            </section>

            <div className="flex w-[31px] items-center pb-[4px] pl-[3px]">
              <VDots />
              <svg className="ml-[6px] h-[7px] w-[5px]" viewBox="0 0 5 7"><path d="M4.500 0V7L.5 3.500Z" fill="#444" /></svg>
            </div>
            <div className="flex w-[1175px] flex-col pt-[10px]">
              <Scene />
              <svg className="ml-[545px] mt-[10px] h-[3px] w-[17px] shrink-0" viewBox="0 0 17 3"><path d="M0 1.500H17" stroke="#b0b0b0" strokeDasharray="1 2" /></svg>
            </div>
            <div className="flex w-[31px] items-center justify-end pb-[4px] pr-[3px]">
              <svg className="mr-[7px] h-[7px] w-[5px]" viewBox="0 0 5 7"><path d="M.5 0V7L4.500 3.500Z" fill="#444" /></svg>
              <VDots />
            </div>

            {/* Views */}
            <section className="flex w-[271px] flex-col pt-px">
              <div className="flex h-[22px] shrink-0 items-center justify-between bg-[#b7b7b7] pl-[4px] pr-[2px]">
                <span className="flex items-center">
                  <svg className="mr-[6px] mt-[2px] h-[10px] w-[16px]" viewBox="0 0 16 10"><path d="M0 1L4 3.500V6.500L0 9Z" fill="#333" /><path d="M5 3.500L7 1H14.500L16 3V8L14.500 9.500H7L5 7Z" fill="#4a4a4a" /></svg>
                  <span className="pt-[2px]">Views</span>
                </span>
                <span className="mb-[3px]"><Close /></span>
              </div>
              <div className="mt-[6px] flex shrink-0 items-center px-[2px]">
                <span className="w-[43px] pt-[2px]">Type:</span>
                <span className="mr-[6px] flex h-[25px] w-[138px] items-center justify-between rounded-[3px] border border-[#a9a9a9] bg-linear-to-b from-white to-[#efefef] pl-[4px] pr-[7px]">
                  <span className="w-[111px] overflow-hidden whitespace-nowrap pb-[2px] pt-[4px]">Orbit (rviz_defau</span>
                  <Arrow open />
                </span>
                <Btn cls="w-[80px]">Zero</Btn>
              </div>
              <div className="mt-[8px] flex h-[788px] shrink-0 flex-col border border-[#b4b4b4] bg-white pt-px">
                <ViewRow b arrow open label="Current View" value="Orbit (rviz)" />
                <ViewRow label="Near Clip …" value="0.01" />
                <ViewRow label="Invert Z Axis" value={<Check />} />
                <ViewRow label="Target Fra…" value="<Fixed Frame>" />
                <ViewRow label="Distance" value="3.28768" />
                <ViewRow label="Focal Shap…" value="0.05" />
                <ViewRow label="Focal Shap…" value={<Check c="#111" />} />
                <ViewRow label="Yaw" value="1.5704" />
                <ViewRow label="Pitch" value="1.5198" />
                <ViewRow arrow label="Focal Point" value={<span className="tracking-[0.1px]">1.1778; -0.11345…</span>} />
                <div className="w-[135px] flex-1 border-r border-[#d4d4d4]" />
              </div>
              <div className="mt-[6px] flex gap-[6px] px-[2px]">
                <Btn cls="w-[85px]">Save</Btn>
                <Btn cls="w-[85px]">Remove</Btn>
                <Btn cls="w-[85px]">Rename</Btn>
              </div>
            </section>
          </div>

          {/* Time */}
          <section className="flex flex-1 flex-col">
            <div className="flex h-[22px] shrink-0 items-center justify-between bg-[#b7b7b7] pl-[4px] pr-[2px]">
              <span className="flex items-center">
                <svg className="mr-[6px] mt-[2px] h-[16px] w-[16px]" viewBox="0 0 16 16"><circle cx="8" cy="8" r="7" fill="#fff" stroke="#555" strokeWidth="2" /><path d="M7.500 4V8.500H11.500" stroke="#222" fill="none" /></svg>
                <span className="pt-[2px]">Time</span>
              </span>
              <span className="mb-[1px]"><Close /></span>
            </div>
            <div className="mt-[7px] flex items-center pl-[11px]">
              <Field label="ROS Time:" value="1737455275.61" lw="w-[76px]" />
              <Field label="ROS Elapsed:" value="109.11" lw="w-[96px]" />
              <Field label="Wall Time:" value="1737455275.64" lw="w-[77px]" />
              <Field label="Wall Elapsed:" value="109.11" lw="w-[96px]" />
              <span className="ml-auto flex items-center gap-[6px] pr-[17px]"><Check /><span className="pt-[3px]">Experimental</span></span>
            </div>
            <div className="mt-[11px] flex items-center justify-between pl-[2px] pr-px">
              <Btn cls="w-[53px]">Reset</Btn>
              <span className="mb-[6px] tracking-[-0.2px]">31 fps</span>
            </div>
          </section>
        </div>
      </div>
    </div>
  );
}
